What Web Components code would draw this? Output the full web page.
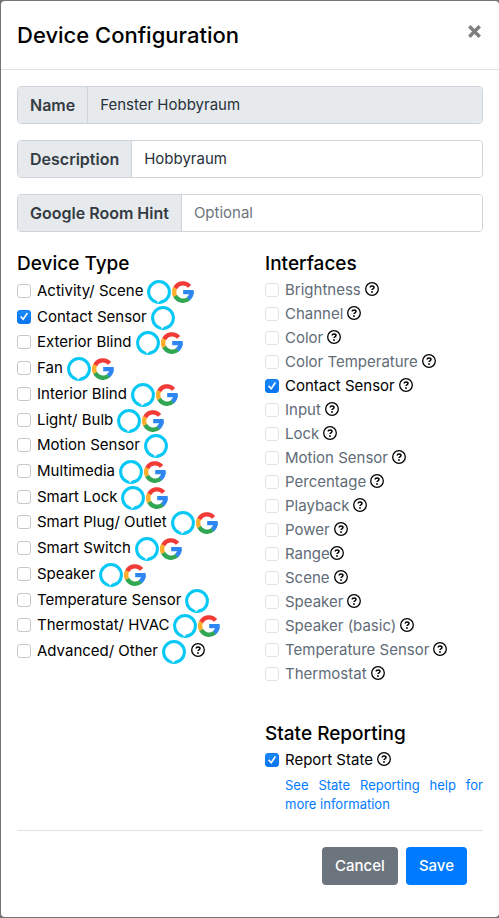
<!DOCTYPE html>
<html lang="en">
<head>
<meta charset="utf-8">
<meta name="viewport" content="width=device-width, initial-scale=1">
<title>Device Configuration</title>
<style>
html{background:#757376}
body{margin:0;font:16px/24px Inter,"Liberation Sans",sans-serif;color:#000}
</style>
</head>
<body>
<config-dialog>
  <span slot="title">Device Configuration</span>
  <text-field label="Name" value="Fenster Hobbyraum" readonly></text-field>
  <text-field label="Description" value="Hobbyraum"></text-field>
  <text-field label="Google Room Hint" placeholder="Optional"></text-field>
  <option-group slot="types" roomy>
    <span slot="heading">Device Type</span>
    <check-option icons="alexa google">Activity/ Scene</check-option>
    <check-option icons="alexa" checked>Contact Sensor</check-option>
    <check-option icons="alexa google">Exterior Blind</check-option>
    <check-option icons="alexa google">Fan</check-option>
    <check-option icons="alexa google">Interior Blind</check-option>
    <check-option icons="alexa google">Light/ Bulb</check-option>
    <check-option icons="alexa">Motion Sensor</check-option>
    <check-option icons="alexa google">Multimedia</check-option>
    <check-option icons="alexa google">Smart Lock</check-option>
    <check-option icons="alexa google">Smart Plug/ Outlet</check-option>
    <check-option icons="alexa google">Smart Switch</check-option>
    <check-option icons="alexa google">Speaker</check-option>
    <check-option icons="alexa">Temperature Sensor</check-option>
    <check-option icons="alexa google">Thermostat/ HVAC</check-option>
    <check-option icons="alexa help">Advanced/ Other</check-option>
  </option-group>
  <option-group slot="interfaces">
    <span slot="heading">Interfaces</span>
    <check-option icons="help" disabled>Brightness</check-option>
    <check-option icons="help" disabled>Channel</check-option>
    <check-option icons="help" disabled>Color</check-option>
    <check-option icons="help" disabled>Color Temperature</check-option>
    <check-option icons="help" checked>Contact Sensor</check-option>
    <check-option icons="help" disabled>Input</check-option>
    <check-option icons="help" disabled>Lock</check-option>
    <check-option icons="help" disabled>Motion Sensor</check-option>
    <check-option icons="help" disabled>Percentage</check-option>
    <check-option icons="help" disabled>Playback</check-option>
    <check-option icons="help" disabled>Power</check-option>
    <check-option icons="help" disabled tight>Range</check-option>
    <check-option icons="help" disabled>Scene</check-option>
    <check-option icons="help" disabled>Speaker</check-option>
    <check-option icons="help" disabled>Speaker (basic)</check-option>
    <check-option icons="help" disabled>Temperature Sensor</check-option>
    <check-option icons="help" disabled>Thermostat</check-option>
  </option-group>
  <option-group slot="interfaces">
    <span slot="heading">State Reporting</span>
    <check-option icons="help" checked>Report State</check-option>
    <help-note>See State Reporting help for more information</help-note>
  </option-group>
  <action-button slot="actions">Cancel</action-button>
  <action-button slot="actions" primary>Save</action-button>
</config-dialog>

<script>
const ICONS = {
  alexa: `<svg class="brand" viewBox="0 0 24 24" aria-hidden="true"><circle cx="12" cy="12" r="10.400" fill="none" stroke="#05c8f5" stroke-width="3"/><path fill="#05c8f5" d="M10.600 23.400c1-2 3-3 6-4l1.400 2.400z"/><path fill="#fff" d="M8.600 20c1.600.5 2 1.200 2 2.200v1.600c.6-1.300 1.400-2.300 2.600-3.100l-1.200-1.500z"/></svg>`,
  google: `<svg class="brand google" viewBox="0 0 22 22" aria-hidden="true"><g fill="none" stroke-width="4.400"><path stroke="#fcae2c" d="M3.250 6.800a8.700 8.700 0 0 0 0 8.400"/><path stroke="#f23a36" d="M17.600 5.400A8.700 8.700 0 0 0 3.250 7.050"/><path stroke="#31a653" d="M3.250 14.950A8.700 8.700 0 0 0 16.700 17.600"/><path stroke="#2e86f0" d="M16.400 17.800a8.700 8.700 0 0 0 3.200-6.300"/></g><path fill="#2e86f0" d="M11.200 9h10.400q.3 2.200 0 4.200H11.200z"/></svg>`,
  help: `<svg class="help" viewBox="0 0 14 14" role="img" aria-label="Help"><circle cx="7" cy="7" r="6.300" fill="none" stroke="#000" stroke-width="1.300"/><path d="M5.100 5.500C5.200 4.400 6 3.900 7 3.900c1.200 0 2 .7 2 1.600 0 1.400-2 1.300-2 2.600" fill="none" stroke="#000" stroke-width="1.500"/><circle cx="7" cy="10" r=".9"/></svg>`
};

class BaseElement extends HTMLElement {
  render(html) { this.attachShadow({ mode: 'open' }).innerHTML = html; }
}

customElements.define('text-field', class extends BaseElement {
  connectedCallback() {
    const ro = this.hasAttribute('readonly');
    this.render(`<style>
      :host{display:flex;border:1px solid #ced4da;border-radius:4px;overflow:hidden;background:#fff}
      label{padding:6px 12px;background:#e7eaed;border-right:1px solid #ced4da;color:#343b43;font-weight:600;white-space:nowrap}
      input{flex:1;min-width:0;box-sizing:border-box;padding:6px 12px;border:0;outline:0;font:inherit;font-size:15px;color:#28303a;background:${ro ? '#e7eaed' : '#fff'}}
      input::placeholder{color:#6c757d;opacity:1}
    </style><label for="f">${this.getAttribute('label')}</label>
    <input id="f" type="text" value="${this.getAttribute('value') || ''}" placeholder="${this.getAttribute('placeholder') || ''}" ${ro ? 'readonly' : ''}>`);
  }
});

customElements.define('check-option', class extends BaseElement {
  connectedCallback() {
    const off = this.hasAttribute('disabled'), on = this.hasAttribute('checked');
    const icons = this.getAttribute('icons').split(' ').map(n => ICONS[n]).join('');
    this.render(`<style>
      :host{display:flex;align-items:center;height:24px;font-size:15px;white-space:nowrap}
      input{appearance:none;flex:none;box-sizing:border-box;width:14px;height:14px;margin:0 6px 0 0;border:1px solid #c9c9c9;border-radius:3px;background:#fff}
      input:disabled{border-color:#e3e3e3}
      input:checked{border-color:#0b7bf5;background:#0b7bf5 linear-gradient(#1c89fb,#0873ee);display:grid;place-items:center}
      input:checked::before{content:"";width:8px;height:8px;background:#fff;clip-path:polygon(0 56%,16% 42%,38% 68%,84% 0,100% 12%,42% 100%)}
      label{color:${off ? '#5f6b76' : '#000'}}
      .icons{display:flex;align-items:center;margin-left:${this.hasAttribute('tight') ? 0 : 4}px}
      .brand{width:24px;height:24px;margin-top:2px}
      .google{width:22px;height:22px;margin-left:1px}
      .help{width:14px;height:14px;margin-bottom:2px}
      .brand + .help{margin-left:5px}
    </style><input id="c" type="checkbox" ${on ? 'checked' : ''} ${off ? 'disabled' : ''}>
    <label for="c"><slot></slot></label><span class="icons">${icons}</span>`);
  }
});

customElements.define('option-group', class extends BaseElement {
  connectedCallback() {
    this.render(`<style>
      :host{display:block}
      h5{margin:0;font-size:19px;font-weight:500;line-height:24px;padding-bottom:2px}
      .list{display:grid}
      :host([roomy]) .list{grid-auto-rows:1fr;align-items:center;min-height:386px}
    </style><h5><slot name="heading"></slot></h5><div class="list"><slot></slot></div>`);
  }
});

customElements.define('help-note', class extends BaseElement {
  connectedCallback() {
    this.render(`<style>
      :host{display:block;padding:4px 0 0 20px;font-size:13px;line-height:19px;text-align:justify}
      a{color:#007bff;text-decoration:none}
    </style><a href="#help"><slot></slot></a>`);
  }
});

customElements.define('action-button', class extends BaseElement {
  connectedCallback() {
    this.render(`<style>
      :host{display:block}
      button{display:block;padding:7px 13px;border:0;border-radius:4px;font:inherit;font-size:15px;font-weight:500;color:#fff;background:#6c757d;cursor:pointer}
      :host([primary]) button{background:#007bff}
    </style><button type="button"><slot></slot></button>`);
  }
});

customElements.define('config-dialog', class extends BaseElement {
  connectedCallback() {
    this.render(`<style>
      :host{display:block;box-sizing:border-box;min-height:100vh;padding:1px 0 1px 1px}
      section{background:#fff;border-radius:4px;padding-bottom:16px}
      header{display:flex;justify-content:space-between;align-items:flex-start;padding:16px;border-bottom:1px solid #dee2e6}
      h4{margin:0;font-size:22px;font-weight:500;line-height:36px}
      .close{display:block;width:16px;height:28px;padding:0;border:0;background:none}
      .close svg{display:block;width:15px;height:15px}
      .body{padding:16px}
      .fields{display:grid;gap:16px}
      .columns{display:grid;grid-template-columns:1fr 1fr;gap:30px;padding-top:20px}
      .right{display:grid;gap:36px;align-content:start}
      footer{display:flex;justify-content:flex-end;gap:8px;margin-top:16px;padding:16px 16px 0 0;border-top:1px solid #dee2e6}
    </style>
    <section role="dialog" aria-labelledby="t">
      <header><h4 id="t"><slot name="title"></slot></h4>
        <button class="close" type="button" aria-label="Close"><svg viewBox="0 0 13 13"><path d="M2 2l9 9M11 2l-9 9" stroke="#7f7f7f" stroke-width="3"/></svg></button></header>
      <div class="body">
        <div class="fields"><slot></slot></div>
        <div class="columns"><slot name="types"></slot><div class="right"><slot name="interfaces"></slot></div></div>
        <footer><slot name="actions"></slot></footer>
      </div>
    </section>`);
  }
});
</script>
</body>
</html>
